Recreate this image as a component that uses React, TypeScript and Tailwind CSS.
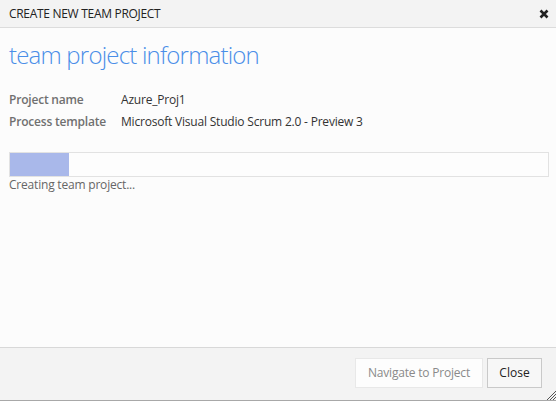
import React from "react";

const font = { fontFamily: '"Segoe UI", "Open Sans", "Noto Sans", sans-serif' };

const App: React.FC = () => {
  const progress = 11;

  return (
    <div
      className="w-[556px] h-[401px] flex flex-col bg-[#fcfcfc] text-[#333] overflow-hidden"
      style={font}
    >
      {/* Title bar */}
      <div className="h-[28px] shrink-0 flex items-center justify-between pl-[9px] pr-[7px] bg-[#f3f3f3] border-b border-[#dcdcdc]">
        <span className="text-[12px] tracking-[-0.3px] text-[#222]">CREATE NEW TEAM PROJECT</span>
        <svg width="10" height="10" viewBox="0 0 10 10" className="mt-[1px]">
          <path d="M1.5 1.5 L8.5 8.5 M8.5 1.5 L1.5 8.5" stroke="#222" strokeWidth="2.6" />
        </svg>
      </div>

      {/* Body */}
      <main className="flex-1 pl-[9px] pr-[7px] pt-[11px]">
        <h1 className="text-[24px] leading-[32px] font-light text-[#4a8ee8] tracking-[-0.8px]">
          team project information
        </h1>

        <div className="mt-[18px] text-[12px] leading-[22px] tracking-[-0.2px]">
          <div className="flex">
            <span className="w-[112px] font-semibold text-[#707070]">Project name</span>
            <span>Azure_Proj1</span>
          </div>
          <div className="flex">
            <span className="w-[112px] font-semibold text-[#707070]">Process template</span>
            <span>Microsoft Visual Studio Scrum 2.0 - Preview 3</span>
          </div>
        </div>

        <div className="mt-[19px] h-[25px] border border-[#e2e2e2] bg-[#fdfdfd]">
          <div className="h-full bg-[#a9b8ea]" style={{ width: `${progress}%` }} />
        </div>
        <p className="text-[12px] leading-[16px] text-[#666] tracking-[-0.2px]">Creating team project...</p>
      </main>

      {/* Footer */}
      <footer className="relative h-[54px] shrink-0 flex justify-end items-start gap-[4px] pt-[10px] pr-[14px] bg-[#f3f3f3] border-t border-[#d8d8d8] border-b border-b-[#a8a8a8]">
        <button
          disabled
          className="h-[30px] w-[128px] text-[12px] tracking-[-0.2px] text-[#8a8a8a] bg-[#fdfdfd] border border-[#e8e8e8]"
        >
          Navigate to Project
        </button>
        <button className="h-[30px] w-[55px] text-[12px] text-[#222] bg-[#f7f7f7] border border-[#c9c9c9]">
          Close
        </button>
        <svg width="11" height="11" viewBox="0 0 11 11" className="absolute right-0 bottom-0">
          <path d="M11 2 L2 11 M11 5 L5 11 M11 8 L8 11" stroke="#555" strokeWidth="1" />
        </svg>
      </footer>
    </div>
  );
};

export default App;
